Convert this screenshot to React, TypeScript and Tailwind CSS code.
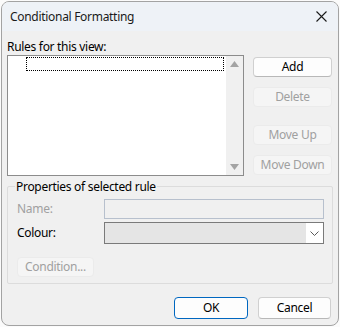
import React from 'react';

const font = { fontFamily: '"Noto Sans", "Segoe UI", sans-serif' };

function Btn({ label, disabled, primary, className = '' }: { label: string; disabled?: boolean; primary?: boolean; className?: string }) {
  const base = 'flex items-center justify-center rounded-[4px] text-[12px] leading-none';
  if (primary)
    return <div className={`${base} border border-[#0067c0] bg-[#fdfdfd] text-black ${className}`}>{label}</div>;
  if (disabled)
    return <div className={`${base} border border-[#ebebeb] bg-[#f5f5f5] text-[#a0a0a0] ${className}`}>{label}</div>;
  return <div className={`${base} border border-[#d0d0d0] border-b-[#b8b8b8] bg-[#fdfdfd] text-black ${className}`}>{label}</div>;
}

export default function App() {
  return (
    <div className="w-[340px] h-[327px] bg-[#fbfbfb] pl-[1px] pt-[1px] tracking-[-0.3px]" style={font}>
      <div className="w-[338px] h-[325px] border border-[#a3a3a3] rounded-[8px] overflow-hidden flex flex-col bg-[#f0f0f0]">
        {/* Title bar */}
        <div className="h-[29px] shrink-0 bg-[#eef2f7] flex items-center">
          <span className="pl-[8px] text-[12px] text-[#1a1a1a] flex-1">Conditional Formatting</span>
          <div className="w-[34px] flex items-center justify-center">
            <svg width="11" height="11" viewBox="0 0 11 11">
              <path d="M0.5 0.5 L10.5 10.5 M10.5 0.5 L0.5 10.5" stroke="#1a1a1a" strokeWidth="1.1" />
            </svg>
          </div>
        </div>

        {/* Body */}
        <div className="flex-1 pl-[5px]">
          <div className="mt-[8px] h-[15px] leading-[15px] text-[12px] text-black">Rules for this view:</div>
          <div className="mt-[1px] flex">
            {/* Rule list */}
            <div className="w-[237px] h-[121px] border border-[#8c8c8c] bg-white flex">
              <div className="flex-1 pt-[1px] pl-[18px]">
                <div className="w-[198px] h-[14px] border border-dotted border-black" />
              </div>
              <div className="w-[17px] bg-[#f0f0f0] flex flex-col items-center justify-between py-[5px]">
                <svg width="9" height="6" viewBox="0 0 9 6"><path d="M4.5 0 L9 6 L0 6 Z" fill="#a3a3a3" /></svg>
                <svg width="9" height="6" viewBox="0 0 9 6"><path d="M0 0 L9 0 L4.5 6 Z" fill="#a3a3a3" /></svg>
              </div>
            </div>
            {/* Side buttons */}
            <div className="ml-[9px] mt-[2px] flex flex-col">
              <Btn label="Add" className="w-[79px] h-[20px]" />
              <Btn label="Delete" disabled className="w-[79px] h-[20px] mt-[10px]" />
              <Btn label="Move Up" disabled className="w-[79px] h-[20px] mt-[18px]" />
              <Btn label="Move Down" disabled className="w-[79px] h-[20px] mt-[10px]" />
            </div>
          </div>

          {/* Properties group */}
          <div className="relative mt-[10px] w-[326px] h-[98px] border border-[#dcdcdc] rounded-[2px] pl-[9px] pt-[12px]">
            <span className="absolute -top-[8px] left-[7px] px-[1px] bg-[#f0f0f0] text-[12px] leading-[16px] text-black">
              Properties of selected rule
            </span>
            <div className="flex items-center">
              <span className="w-[87px] text-[12px] text-[#a0a0a0]">Name:</span>
              <div className="w-[220px] h-[20px] border border-[#b7c0cd] bg-[#f0f0f0]" />
            </div>
            <div className="flex items-center mt-[3px]">
              <span className="w-[87px] text-[12px] text-black">Colour:</span>
              <div className="w-[220px] h-[22px] border border-[#7a7a7a] bg-[#e5e5e5] flex justify-end">
                <div className="w-[17px] h-full bg-white flex items-center justify-center">
                  <svg width="9" height="5" viewBox="0 0 9 5"><path d="M0.5 0.5 L4.5 4.5 L8.5 0.5" stroke="#5a5a5a" fill="none" strokeWidth="1" /></svg>
                </div>
              </div>
            </div>
            <Btn label="Condition..." disabled className="w-[77px] h-[20px] mt-[13px]" />
          </div>

          {/* Dialog buttons */}
          <div className="mt-[13px] flex pl-[167px]">
            <Btn label="OK" primary className="w-[74px] h-[22px]" />
            <Btn label="Cancel" className="w-[73px] h-[22px] ml-[10px]" />
          </div>
        </div>
      </div>
    </div>
  );
}
